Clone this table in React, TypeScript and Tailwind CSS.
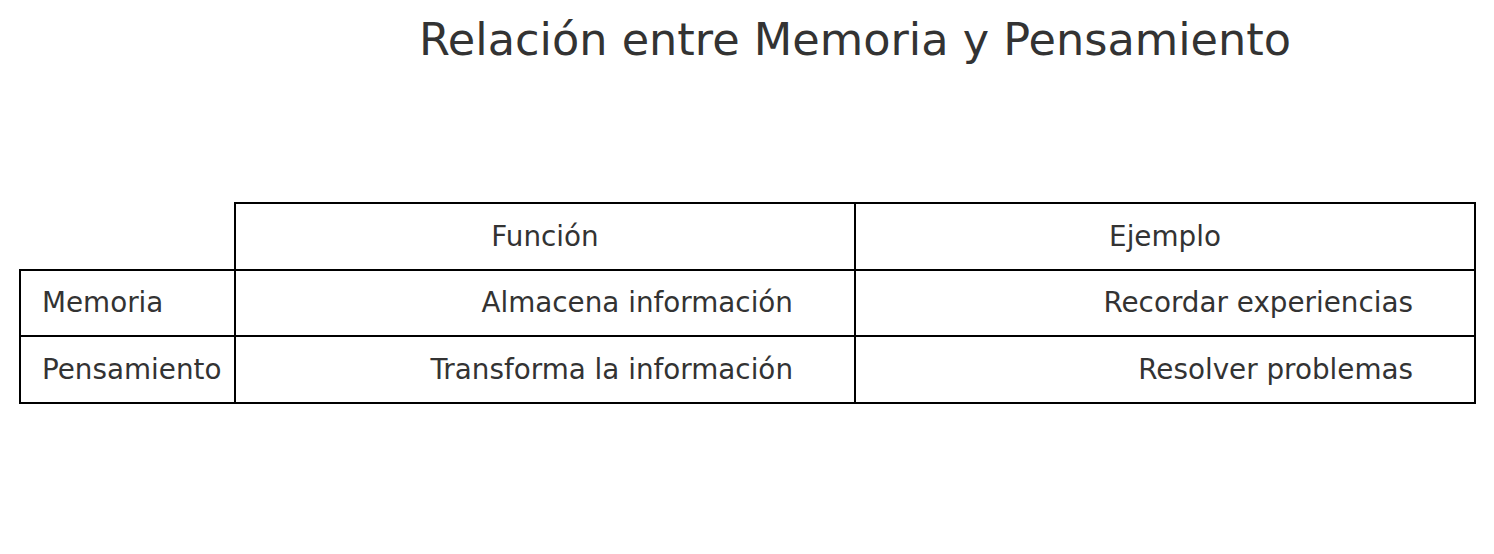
import React from "react";

const font = { fontFamily: '"DejaVu Sans", sans-serif' };

export default function App() {
  const rows = [
    ["Memoria", "Almacena información", "Recordar experiencias", "h-[66px]"],
    ["Pensamiento", "Transforma la información", "Resolver problemas", "h-[67px]"],
  ];
  return (
    <div className="w-[1494px] h-[554px] bg-white text-[#333333] font-['DejaVu_Sans',sans-serif]" style={font}>
      <div className="pt-[15px] ml-[235px] w-[1240px] text-center text-[44.6px] leading-[51px]">
        Relación entre Memoria y Pensamiento
      </div>
      <div className="mt-[136px] ml-[19px] text-[27.8px]">
        <table className="border-collapse table-fixed w-[1457px]">
          <colgroup>
            <col className="w-[215px]" />
            <col className="w-[620px]" />
            <col className="w-[620px]" />
          </colgroup>
          <tbody>
            <tr className="h-[67px]">
              <td className="p-0"></td>
              <td className="border-2 border-black p-0 text-center align-middle">Función</td>
              <td className="border-2 border-black p-0 text-center align-middle">Ejemplo</td>
            </tr>
            {rows.map((r) => (
              <tr key={r[0]} className={r[3]}>
                <td className="border-2 border-black pl-[21px] pr-0 py-0 text-left align-middle">{r[0]}</td>
                <td className="border-2 border-black pr-[61px] pl-0 py-0 text-right align-middle">{r[1]}</td>
                <td className="border-2 border-black pr-[61px] pl-0 py-0 text-right align-middle">{r[2]}</td>
              </tr>
            ))}
          </tbody>
        </table>
      </div>
    </div>
  );
}
